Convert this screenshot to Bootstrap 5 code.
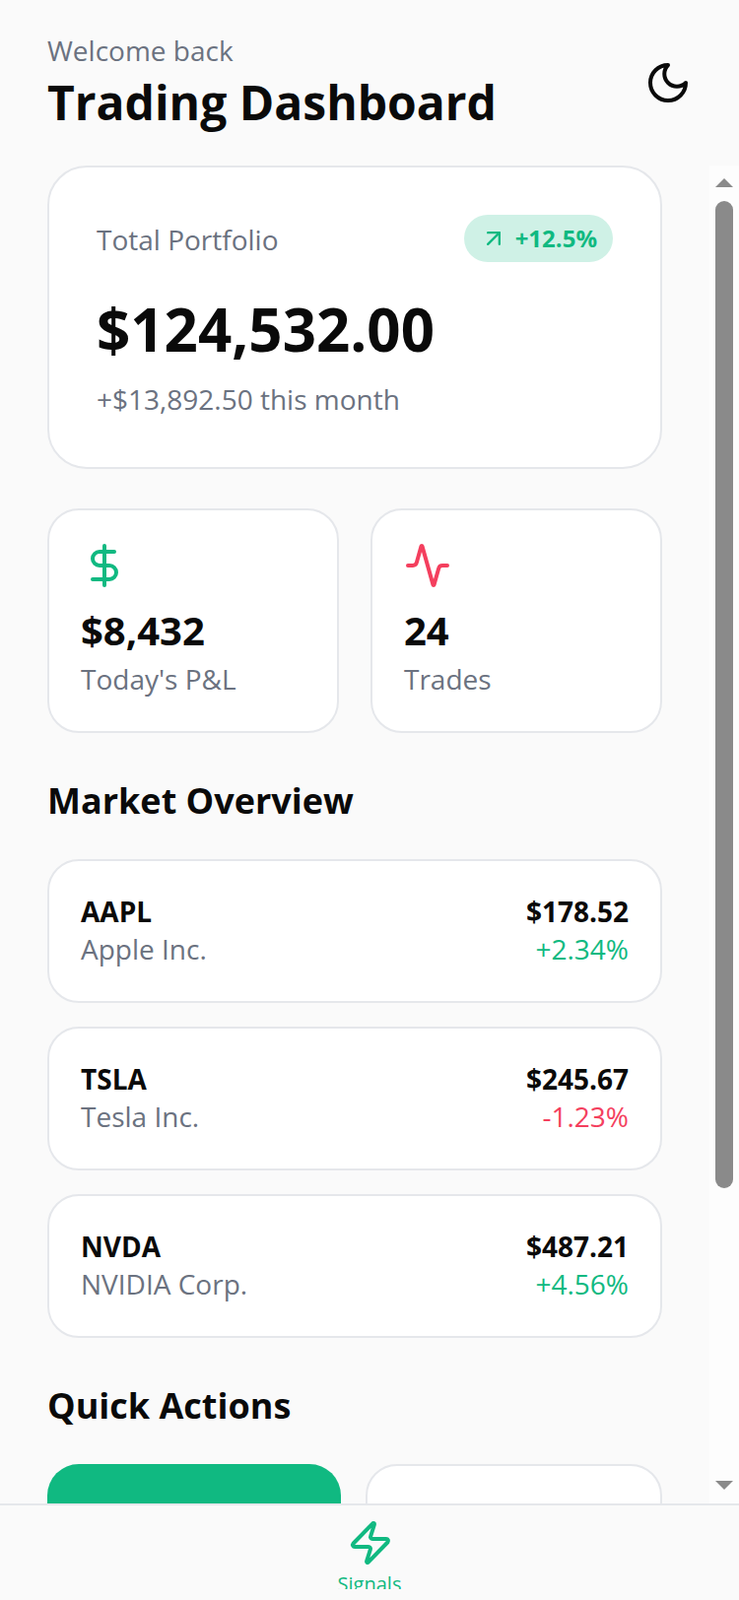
<!DOCTYPE html>
<html lang="en">
<head>
  <meta charset="UTF-8">
  <title>Trading Dashboard</title>
  <link rel="stylesheet" href="https://cdn.jsdelivr.net/npm/bootstrap@5.3.3/dist/css/bootstrap.min.css">
  <style>
    html, body { height: 100%; }
    body { font-family: "Open Sans", sans-serif; background: #fafafa; color: #0a0a0a; overflow: hidden; font-size: 28px; line-height: 40px; }
    .app-shell { height: 1624px; }
    .top-head { height: 168px; padding: 32px 48px 32px; }
    .muted-text { color: #6b7280; }
    .welcome-line { line-height: 38px; margin-bottom: 2px; }
    .head-title { font-size: 48px; line-height: 64px; font-weight: 700; margin: 0; }
    .moon-icon { width: 48px; height: 48px; color: #0a0a0a; }
    .scroll-wrap { height: 1358px; }
    .scroll-area { width: 720px; overflow: hidden; padding: 0 48px; }
    .scroll-rail { width: 30px; background: #fdfdfd; padding: 13px 6px 14px; }
    .rail-up { border-left: 9px solid transparent; border-right: 9px solid transparent; border-bottom: 9px solid #8a8a8a; }
    .rail-down { border-left: 9px solid transparent; border-right: 9px solid transparent; border-top: 9px solid #8a8a8a; }
    .rail-thumb { height: 1002px; margin: 14px 0 auto; background: #8a8a8a; border-radius: 9px; }
    .tile { background: #fff; border: 2px solid #e5e7eb; }
    .tile-main { border-radius: 40px; padding: 48px 48px 50px; margin-bottom: 40px; }
    .tile-small { border-radius: 32px; padding: 32px; }
    .portfolio-label { padding-top: 2px; }
    .gain-pill { height: 48px; padding: 0 16px; gap: 8px; background: #cff1e6; color: #10b981; font-size: 24px; font-weight: 700; border-radius: 24px; }
    .big-amount { font-size: 60px; line-height: 72px; font-weight: 700; margin: 32px 0 16px; }
    .month-line { line-height: 38px; }
    .stat-grid { display: grid; grid-template-columns: 1fr 1fr; gap: 32px; }
    .stat-tile { padding-bottom: 33px; }
    .stat-icon { width: 48px; height: 48px; display: block; margin-bottom: 14px; }
    .stat-value { font-size: 40px; line-height: 56px; font-weight: 700; margin-bottom: 1px; }
    .sect-title { font-size: 36px; line-height: 56px; font-weight: 700; margin: 41px 0 31px; }
    .stock-list { display: flex; flex-direction: column; gap: 24px; }
    .stock-row { height: 146px; padding-top: 31px; }
    .stock-sub { line-height: 36px; }
    .up-text { color: #10b981; }
    .down-text { color: #f43f5e; }
    .strong-text { font-weight: 700; }
    .action-grid { display: grid; grid-template-columns: 298px 301px; gap: 25px; }
    .action-tile { height: 156px; border-radius: 32px; }
    .action-primary { background: #10b981; }
    .bottom-nav { height: 98px; border-top: 2px solid #e5e7eb; padding: 14px 0 11px; background: #fafafa; }
    .nav-item-box { height: 71px; overflow: hidden; color: #10b981; font-size: 20px; line-height: 28px; }
    .nav-icon { width: 48px; height: 48px; display: block; margin: 0 0 4px 352px; }
  </style>
</head>
<body>
<div class="app-shell d-flex flex-column">

  <header class="top-head d-flex justify-content-between align-items-center">
    <div>
      <div class="muted-text welcome-line">Welcome back</div>
      <h1 class="head-title">Trading Dashboard</h1>
    </div>
    <svg class="moon-icon" viewBox="0 0 24 24" fill="none" stroke="currentColor" stroke-width="2" stroke-linecap="round" stroke-linejoin="round"><path d="M12 3a6 6 0 0 0 9 9 9 9 0 1 1-9-9Z"/></svg>
  </header>

  <div class="scroll-wrap d-flex">
    <main class="scroll-area">
      <section class="tile tile-main">
        <div class="d-flex justify-content-between align-items-center">
          <span class="muted-text portfolio-label">Total Portfolio</span>
          <span class="gain-pill d-flex align-items-center">
            <svg width="28" height="28" viewBox="0 0 24 24" fill="none" stroke="currentColor" stroke-width="2" stroke-linecap="round" stroke-linejoin="round"><path d="M7 7h10v10"/><path d="M7 17 17 7"/></svg>
            +12.5%
          </span>
        </div>
        <div class="big-amount">$124,532.00</div>
        <div class="muted-text month-line">+$13,892.50 this month</div>
      </section>

      <section class="stat-grid">
        <div class="tile tile-small stat-tile">
          <svg class="stat-icon up-text" viewBox="0 0 24 24" fill="none" stroke="currentColor" stroke-width="2" stroke-linecap="round" stroke-linejoin="round"><line x1="12" x2="12" y1="2" y2="22"/><path d="M17 5H9.5a3.5 3.5 0 0 0 0 7h5a3.5 3.5 0 0 1 0 7H6"/></svg>
          <div class="stat-value">$8,432</div>
          <div class="muted-text">Today's P&amp;L</div>
        </div>
        <div class="tile tile-small stat-tile">
          <svg class="stat-icon down-text" viewBox="0 0 24 24" fill="none" stroke="currentColor" stroke-width="2" stroke-linecap="round" stroke-linejoin="round"><path d="M22 12h-2.48a2 2 0 0 0-1.93 1.46l-2.35 8.36a.25.25 0 0 1-.48 0L9.24 2.18a.25.25 0 0 0-.48 0l-2.35 8.36A2 2 0 0 1 4.49 12H2"/></svg>
          <div class="stat-value">24</div>
          <div class="muted-text">Trades</div>
        </div>
      </section>

      <h2 class="sect-title">Market Overview</h2>
      <section class="stock-list">
        <div class="tile tile-small stock-row d-flex justify-content-between align-items-start">
          <div>
            <div class="strong-text">AAPL</div>
            <div class="muted-text stock-sub">Apple Inc.</div>
          </div>
          <div class="text-end">
            <div class="strong-text">$178.52</div>
            <div class="up-text stock-sub">+2.34%</div>
          </div>
        </div>
        <div class="tile tile-small stock-row d-flex justify-content-between align-items-start">
          <div>
            <div class="strong-text">TSLA</div>
            <div class="muted-text stock-sub">Tesla Inc.</div>
          </div>
          <div class="text-end">
            <div class="strong-text">$245.67</div>
            <div class="down-text stock-sub">-1.23%</div>
          </div>
        </div>
        <div class="tile tile-small stock-row d-flex justify-content-between align-items-start">
          <div>
            <div class="strong-text">NVDA</div>
            <div class="muted-text stock-sub">NVIDIA Corp.</div>
          </div>
          <div class="text-end">
            <div class="strong-text">$487.21</div>
            <div class="up-text stock-sub">+4.56%</div>
          </div>
        </div>
      </section>

      <h2 class="sect-title">Quick Actions</h2>
      <section class="action-grid">
        <div class="action-tile action-primary"></div>
        <div class="action-tile tile"></div>
      </section>
    </main>
    <div class="scroll-rail d-flex flex-column" aria-hidden="true">
      <div class="rail-up"></div>
      <div class="rail-thumb"></div>
      <div class="rail-down"></div>
    </div>
  </div>

  <nav class="bottom-nav">
    <div class="nav-item-box text-center">
      <svg class="nav-icon" viewBox="0 0 24 24" fill="none" stroke="currentColor" stroke-width="2" stroke-linecap="round" stroke-linejoin="round"><path d="M4 14a1 1 0 0 1-.78-1.63l9.9-10.2a.5.5 0 0 1 .86.46l-1.92 6.02A1 1 0 0 0 13 10h7a1 1 0 0 1 .78 1.63l-9.9 10.2a.5.5 0 0 1-.86-.46l1.92-6.02A1 1 0 0 0 11 14z"/></svg>
      Signals
    </div>
  </nav>

</div>
<script src="https://cdn.jsdelivr.net/npm/bootstrap@5.3.3/dist/js/bootstrap.bundle.min.js"></script>
</body>
</html>
